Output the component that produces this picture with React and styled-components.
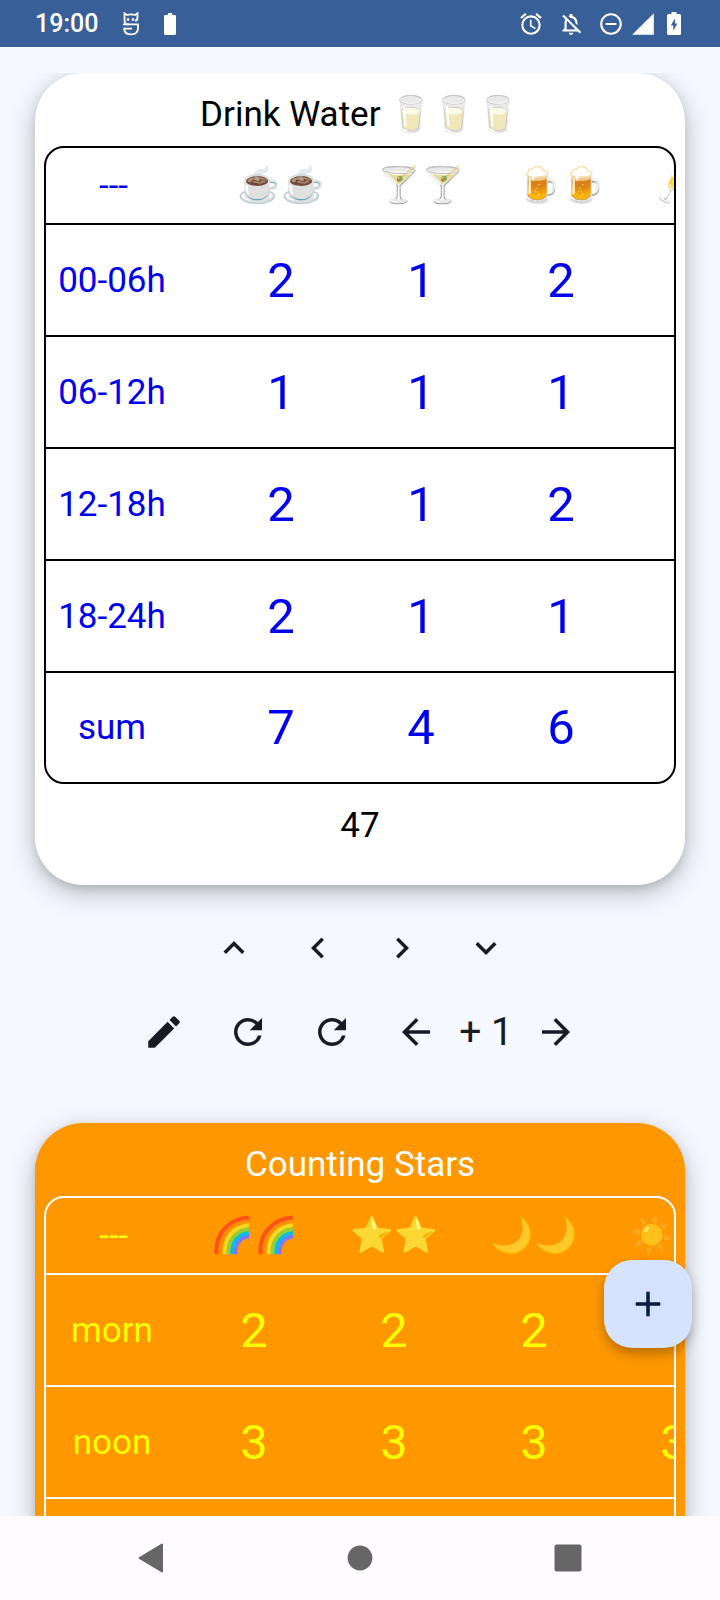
import { useState } from "react";
import styled, { createGlobalStyle } from "styled-components";
import {
  MdAdd,
  MdArrowBack,
  MdArrowForward,
  MdEdit,
  MdKeyboardArrowDown,
  MdKeyboardArrowLeft,
  MdKeyboardArrowRight,
  MdKeyboardArrowUp,
  MdOutlineAlarm,
  MdOutlineDoNotDisturbOn,
  MdOutlineNotificationsOff,
  MdRefresh,
  MdSignalCellular4Bar,
} from "react-icons/md";

const drinks = {
  title: "Drink Water 🥛🥛🥛",
  columns: ["☕☕", "🍸🍸", "🍺🍺", "🥂🥂"],
  rows: [
    { label: "00-06h", values: [2, 1, 2, ""] },
    { label: "06-12h", values: [1, 1, 1, ""] },
    { label: "12-18h", values: [2, 1, 2, ""] },
    { label: "18-24h", values: [2, 1, 1, ""] },
    { label: "sum", values: [7, 4, 6, ""] },
  ],
  total: 47,
};

const stars = {
  title: "Counting Stars",
  columns: ["🌈🌈", "⭐⭐", "🌙🌙", "☀️☀️"],
  rows: [
    { label: "morn", values: [2, 2, 2, 2] },
    { label: "noon", values: [3, 3, 3, 3] },
    { label: "eve", values: [1, 1, 1, 1] },
  ],
};

const App = () => {
  const [step, setStep] = useState(1);

  return (
    <Screen>
      <GlobalStyle />
      <StatusBar>
        <StatusGroup $gap="24px">
          <Clock>19:00</Clock>
          <MaskIcon />
          <BatteryIcon width={12} height={22} />
        </StatusGroup>
        <StatusGroup $gap="14px">
          <MdOutlineAlarm size={26} />
          <MdOutlineNotificationsOff size={26} />
          <StatusGroup $gap="6px">
            <MdOutlineDoNotDisturbOn size={26} />
            <MdSignalCellular4Bar size={26} />
            <ChargingBox>
              <BatteryIcon width={14} height={23} charging />
            </ChargingBox>
          </StatusGroup>
        </StatusGroup>
      </StatusBar>

      <Content>
        <CounterCard
          data={drinks}
          labelWidth="165px"
          background="#ffffff"
          line="#000000"
          ink="#0000f0"
        />
        <Controls>
          <Toolbar>
            <IconButton aria-label="Up"><MdKeyboardArrowUp /></IconButton>
            <IconButton aria-label="Left"><MdKeyboardArrowLeft /></IconButton>
            <IconButton aria-label="Right"><MdKeyboardArrowRight /></IconButton>
            <IconButton aria-label="Down"><MdKeyboardArrowDown /></IconButton>
          </Toolbar>
          <Toolbar>
            <IconButton aria-label="Edit"><MdEdit /></IconButton>
            <IconButton aria-label="Reset row"><MdRefresh /></IconButton>
            <IconButton aria-label="Reset all"><MdRefresh /></IconButton>
            <IconButton aria-label="Less" onClick={() => setStep(step - 1)}>
              <MdArrowBack />
            </IconButton>
            <Step>+ {step}</Step>
            <IconButton aria-label="More" onClick={() => setStep(step + 1)}>
              <MdArrowForward />
            </IconButton>
          </Toolbar>
        </Controls>
        <CounterCard
          data={stars}
          labelWidth="138px"
          background="#ff9800"
          line="#ffffff"
          ink="#ffff00"
        />
      </Content>

      <Fab aria-label="Add counter"><MdAdd size={42} /></Fab>

      <NavBar>
        <NavButton aria-label="Back">
          <svg width="30" height="30" viewBox="0 0 30 30">
            <path d="M25 1.5v27L2.5 15z" stroke="currentColor" strokeWidth="2" strokeLinejoin="round" />
          </svg>
        </NavButton>
        <NavButton aria-label="Home">
          <svg width="30" height="30" viewBox="0 0 30 30">
            <circle cx="15" cy="15" r="12.4" />
          </svg>
        </NavButton>
        <NavButton aria-label="Recents">
          <svg width="30" height="30" viewBox="0 0 30 30">
            <rect x="1.5" y="1.5" width="27" height="27" rx="2" />
          </svg>
        </NavButton>
      </NavBar>
    </Screen>
  );
};
export default App;

const CounterCard = ({ data, labelWidth, background, line, ink }) => (
  <Card $background={background} $line={line}>
    <Title>{data.title}</Title>
    <Frame>
      <Table $ink={ink}>
        <thead>
          <tr>
            <LabelCell $width={labelWidth} scope="col">---</LabelCell>
            {data.columns.map((column) => (
              <HeadCell key={column} scope="col">{column}</HeadCell>
            ))}
          </tr>
        </thead>
        <tbody>
          {data.rows.map((row) => (
            <tr key={row.label}>
              <LabelCell $width={labelWidth} scope="row">{row.label}</LabelCell>
              {row.values.map((value, i) => (
                <ValueCell key={i}>{value}</ValueCell>
              ))}
            </tr>
          ))}
        </tbody>
      </Table>
    </Frame>
    {data.total && <Total>{data.total}</Total>}
  </Card>
);

const MaskIcon = () => (
  <svg width="18" height="24" viewBox="0 0 18 24" fill="none" stroke="currentColor" strokeWidth="1.8">
    <path d="M15.5 6V1.2L13 3Q9 1.6 5 3L2.5 1.2V8Q2.5 12.4 6 12.4H16V16Q16 22.4 9.3 22.4Q2.4 22.4 2.2 16.6H10" />
    <path d="M6 6.2v2.6M11 6.2v2.6" strokeWidth="2.4" />
    <path d="M1 12.4h6M13 8.6q2.4 0 2.5-3" />
  </svg>
);

const BatteryIcon = ({ width, height, charging }) => (
  <svg width={width} height={height} viewBox="0 0 14 23" preserveAspectRatio="none" fill="currentColor">
    <path
      fillRule="evenodd"
      d={
        "M4.5 0h5v2H12.5Q14 2 14 3.5V21.5Q14 23 12.5 23H1.5Q0 23 0 21.5V3.5Q0 2 1.5 2H4.5z" +
        (charging ? "M8 6.5L3.8 13.5H6.3V18.8L10.4 11.6H8z" : "")
      }
    />
  </svg>
);

const GlobalStyle = createGlobalStyle`
  * {
    box-sizing: border-box;
  }

  body {
    margin: 0;
    background: #f5f9ff;
    font-family: Roboto, "Noto Color Emoji", sans-serif;
  }

  button {
    border: none;
    padding: 0;
    background: none;
    color: inherit;
    font: inherit;
    cursor: pointer;
  }

  svg {
    display: block;
  }
`;

const Screen = styled.div`
  display: flex;
  flex-direction: column;
  height: 100vh;
`;

const StatusBar = styled.header`
  display: flex;
  flex-shrink: 0;
  align-items: center;
  justify-content: space-between;
  height: 47px;
  padding: 0 32px 0 35px;
  background: #385f98;
  color: #ffffff;
`;

const StatusGroup = styled.div`
  display: flex;
  align-items: center;
  gap: ${(props) => props.$gap};
`;

const ChargingBox = styled.span`
  padding: 0 7px 0 5px;
`;

const Clock = styled.span`
  font-size: 25px;
  font-weight: 500;
`;

const Content = styled.main`
  flex: 1;
  min-height: 0;
  margin-top: 26px;
  padding: 0 35px;
  overflow-y: auto;
  scrollbar-width: none;
`;

const Card = styled.section`
  --line: ${(props) => props.$line};
  padding: 14px 9px 0;
  border-radius: 48px;
  background: ${(props) => props.$background};
  color: var(--line);
  box-shadow: 0 8px 28px rgba(0, 0, 0, 0.24), 0 4px 10px rgba(0, 0, 0, 0.12);
`;

const Title = styled.h2`
  margin: 0 0 3px;
  font-size: 35px;
  font-weight: 400;
  line-height: 56px;
  text-align: center;
`;

const Frame = styled.div`
  border: 2px solid var(--line);
  border-radius: 20px;
  overflow-x: auto;
  scrollbar-width: none;
`;

const Table = styled.table`
  width: max-content;
  table-layout: fixed;
  border-spacing: 0;
  color: ${(props) => props.$ink};

  tbody tr:last-child > * {
    height: 109px;
    border-bottom: none;
  }
`;

const Cell = styled.td`
  width: 140px;
  min-width: 140px;
  height: 112px;
  padding: 0;
  border-bottom: 2px solid var(--line);
  font-weight: 400;
  text-align: center;
  white-space: nowrap;
`;

const LabelCell = styled(Cell).attrs({ as: "th" })`
  width: ${(props) => props.$width};
  min-width: ${(props) => props.$width};
  padding-right: calc(${(props) => props.$width} - 132px);
  font-size: 35px;

  thead & {
    height: 77px;
    padding-right: calc(${(props) => props.$width} - 135px);
  }
`;

const HeadCell = styled(Cell).attrs({ as: "th" })`
  height: 77px;
  font-size: 35px;
  line-height: 56px;
`;

const ValueCell = styled(Cell)`
  font-size: 49px;
`;

const Total = styled.p`
  margin: 0;
  padding-bottom: 17px;
  font-size: 35px;
  line-height: 84px;
  text-align: center;
`;

const Controls = styled.div`
  padding: 21px 0 49px;
  color: #171b24;
`;

const Toolbar = styled.div`
  display: flex;
  justify-content: center;
`;

const IconButton = styled.button`
  display: grid;
  place-items: center;
  width: 84px;
  height: 84px;

  svg {
    width: 42px;
    height: 42px;
  }
`;

const Step = styled.output`
  width: 56px;
  font-size: 39px;
  line-height: 84px;
  text-align: center;
  white-space: nowrap;
`;

const Fab = styled.button`
  position: fixed;
  right: 28px;
  bottom: 252px;
  display: grid;
  place-items: center;
  width: 88px;
  height: 88px;
  && {
    border-radius: 28px;
    background: #d6e3ff;
    color: #001b3d;
  }
  box-shadow: 0 6px 12px rgba(0, 0, 0, 0.28);
`;

const NavBar = styled.nav`
  display: grid;
  flex-shrink: 0;
  grid-template-columns: repeat(3, 1fr);
  height: 84px;
  padding: 0 48px;
  background: #fffbff;
  color: #666666;
`;

const NavButton = styled.button`
  display: grid;
  place-items: center;

  svg {
    fill: currentColor;
  }
`;
